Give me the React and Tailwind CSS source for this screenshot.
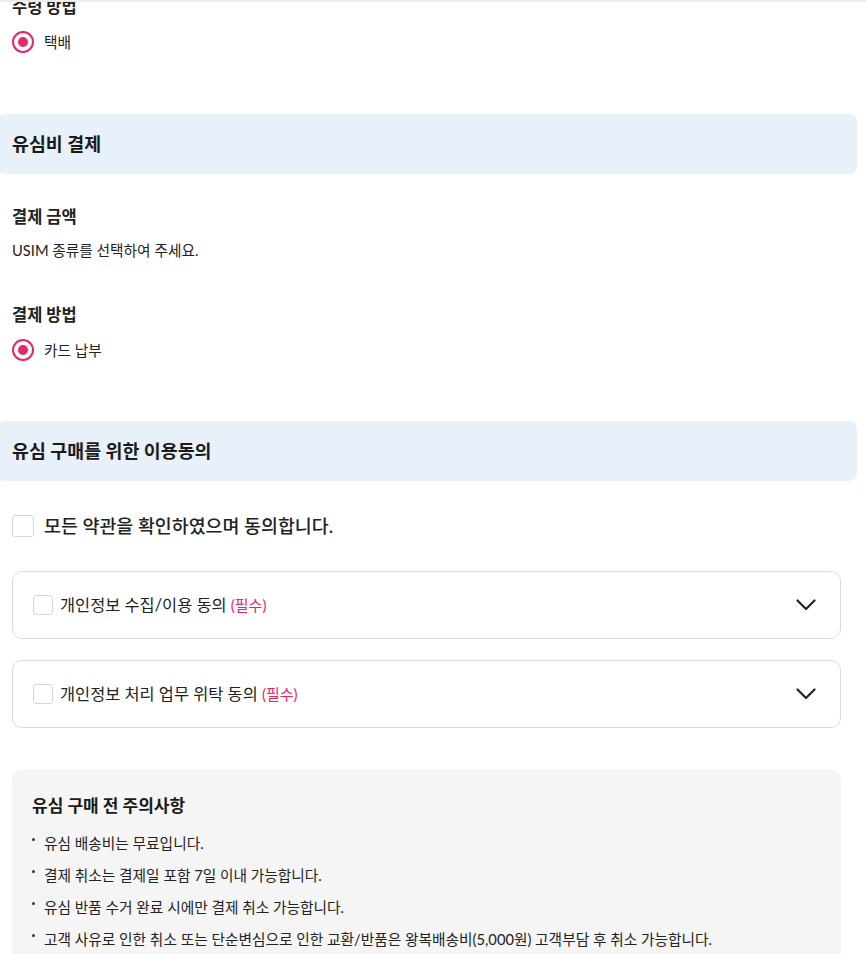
const font = { fontFamily: 'Lato, "Noto Sans CJK KR", sans-serif' };

function Radio({ label }) {
  return (
    <div className="flex items-center gap-[10px]">
      <span className="flex h-[22px] w-[22px] items-center justify-center rounded-full border-2 border-[#e8266b]">
        <span className="h-[10px] w-[10px] rounded-full bg-[#e8266b]" />
      </span>
      <span className="text-[14.7px] leading-[20px] text-[#222]">{label}</span>
    </div>
  );
}

function Bar({ children }) {
  return (
    <div className="flex h-[60px] w-[857px] items-center rounded-r-lg rounded-l-[4px] bg-[#e8f0fa] pl-3">
      <h2 className="text-[18.4px] font-bold leading-[24px] text-[#1a1a1a]">{children}</h2>
    </div>
  );
}

function Chevron() {
  return (
    <svg width="20" height="12" viewBox="0 0 20 12" fill="none">
      <polyline points="1.5,1.5 10,10 18.5,1.5" stroke="#222" strokeWidth="2.2" strokeLinecap="round" strokeLinejoin="round" />
    </svg>
  );
}

function Agree({ label, className = "" }) {
  return (
    <div className={"flex h-[68px] w-[829px] items-center justify-between rounded-[10px] border border-[#dcdcdc] pl-5 pr-6 " + className}>
      <div className="flex items-center gap-[7px]">
        <span className="h-[20px] w-[20px] rounded-[3px] border border-[#d6d6d6] bg-white" />
        <span className="text-[16.4px] leading-[22px] text-[#222]">
          {label} <span className="text-[15px] text-[#e8266b]">(필수)</span>
        </span>
      </div>
      <Chevron />
    </div>
  );
}

const notices = [
  "유심 배송비는 무료입니다.",
  "결제 취소는 결제일 포함 7일 이내 가능합니다.",
  "유심 반품 수거 완료 시에만 결제 취소 가능합니다.",
  "고객 사유로 인한 취소 또는 단순변심으로 인한 교환/반품은 왕복배송비(5,000원) 고객부담 후 취소 가능합니다.",
];

export default function App() {
  return (
    <div className="relative h-[954px] overflow-hidden bg-white" style={font}>
      <div className="absolute left-0 right-0 top-0 z-10 h-[2px] bg-[#ececec]" />
      <div className="-mt-[4px]">
        <div className="pl-3">
          <h3 className="text-[16.5px] font-bold leading-[22px] text-[#222]">수령 방법</h3>
          <div className="mt-[13px]">
            <Radio label="택배" />
          </div>
        </div>

        <div className="mt-[61px]">
          <Bar>유심비 결제</Bar>
        </div>

        <div className="pl-3">
          <h3 className="mt-[32px] text-[16.5px] font-bold leading-[22px] text-[#222]">결제 금액</h3>
          <p className="mt-[12px] text-[14.7px] leading-[20px] text-[#222]">USIM 종류를 선택하여 주세요.</p>
          <h3 className="mt-[44px] text-[16.5px] font-bold leading-[22px] text-[#222]">결제 방법</h3>
          <div className="mt-[13px]">
            <Radio label="카드 납부" />
          </div>
        </div>

        <div className="mt-[60px]">
          <Bar>유심 구매를 위한 이용동의</Bar>
        </div>

        <div className="pl-3">
          <div className="mt-[34px] flex h-[22px] items-center gap-[10px]">
            <span className="h-[22px] w-[22px] rounded-[3px] border border-[#d6d6d6] bg-white" />
            <span className="text-[18.4px] font-medium leading-[22px] text-[#222]">모든 약관을 확인하였으며 동의합니다.</span>
          </div>

          <Agree label="개인정보 수집/이용 동의" className="mt-[34px]" />
          <Agree label="개인정보 처리 업무 위탁 동의" className="mt-[21px]" />

          <div className="mt-[41px] w-[829px] rounded-[12px] bg-[#f5f5f5] px-5 pb-6 pt-[24px]">
            <h3 className="text-[17px] font-bold leading-[26px] text-[#1a1a1a]">유심 구매 전 주의사항</h3>
            <ul className="mt-[14px] flex flex-col gap-[12px]">
              {notices.map((n) => (
                <li key={n} className="flex items-start gap-[9px] text-[14.7px] leading-[20px] text-[#222]">
                  <span className="mt-[5px] h-[3px] w-[3px] shrink-0 rounded-full bg-[#333]" />
                  <span>{n}</span>
                </li>
              ))}
            </ul>
          </div>
        </div>
      </div>
    </div>
  );
}
